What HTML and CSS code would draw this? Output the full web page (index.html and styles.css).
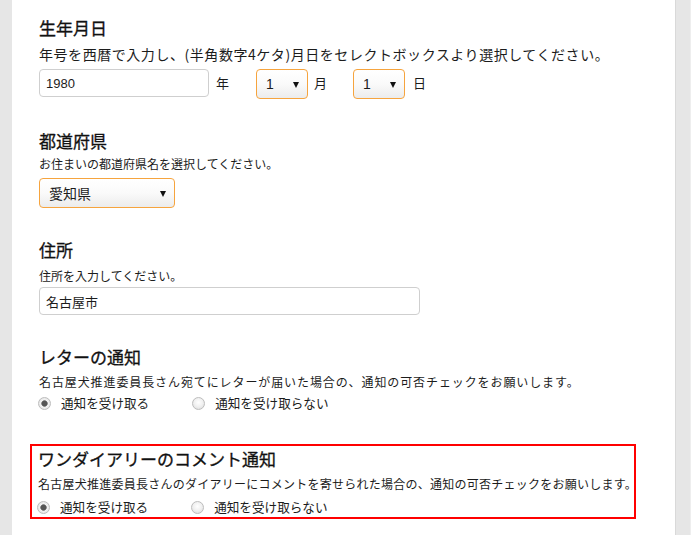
FILE: index.html
```html
<!DOCTYPE html>
<html lang="ja">
<head>
<meta charset="utf-8">
<title>プロフィール設定</title>
<link rel="stylesheet" href="styles.css">
</head>
<body>
<div class="page">
  <div class="gutter-left"></div>
  <main class="content">
    <section class="field f-birth">
      <h2>生年月日</h2>
      <p class="desc desc-lg">年号を西暦で入力し、(半角数字4ケタ)月日をセレクトボックスより選択してください。</p>
      <div class="row">
        <input class="text text-year" type="text" value="1980">
        <span class="unit unit-year">年</span>
        <span class="select sel-small"><span class="sel-val">1</span></span>
        <span class="unit unit-month">月</span>
        <span class="select sel-small"><span class="sel-val">1</span></span>
        <span class="unit unit-day">日</span>
      </div>
    </section>

    <section class="field f-pref">
      <h2>都道府県</h2>
      <p class="desc">お住まいの都道府県名を選択してください。</p>
      <span class="select sel-pref"><span class="sel-val">愛知県</span></span>
    </section>

    <section class="field f-addr">
      <h2>住所</h2>
      <p class="desc">住所を入力してください。</p>
      <input class="text text-addr" type="text" value="名古屋市">
    </section>

    <section class="field f-letter">
      <h2>レターの通知</h2>
      <p class="desc desc-letter">名古屋犬推進委員長さん宛てにレターが届いた場合の、通知の可否チェックをお願いします。</p>
      <div class="radios">
        <label class="opt"><input type="radio" name="letter" checked><span>通知を受け取る</span></label>
        <label class="opt opt-2"><input type="radio" name="letter"><span>通知を受け取らない</span></label>
      </div>
    </section>

    <section class="field f-diary">
      <h2>ワンダイアリーのコメント通知</h2>
      <p class="desc desc-diary">名古屋犬推進委員長さんのダイアリーにコメントを寄せられた場合の、通知の可否チェックをお願いします。</p>
      <div class="radios">
        <label class="opt"><input type="radio" name="diary" checked><span>通知を受け取る</span></label>
        <label class="opt opt-2"><input type="radio" name="diary"><span>通知を受け取らない</span></label>
      </div>
    </section>
  </main>
  <div class="gutter-right"></div>
  <div class="edge"></div>
</div>
</body>
</html>
```

FILE: styles.css
```css
html, body {
  margin: 0;
  padding: 0;
  background: #ffffff;
}

body {
  font-family: "Noto Sans CJK JP", "Liberation Sans", sans-serif;
  color: #1c1c1c;
}

.page {
  display: flex;
  height: 535px;
  overflow: hidden;
}

.gutter-left {
  width: 12px;
  flex: none;
  background: #e6e6e6;
}

.content {
  width: 663px;
  flex: none;
  box-sizing: border-box;
  padding: 17px 0 0 27px;
  background: #ffffff;
}

.gutter-right {
  width: 14px;
  flex: none;
  background: #e6e6e6;
  border-left: 1px solid #d9d9d9;
  border-right: 1px solid #eeeeee;
}

.edge {
  flex: 1;
  background: #ffffff;
}

.field h2 {
  margin: 0;
  font-size: 17px;
  line-height: 22px;
  font-weight: 400;
  color: #111111;
  -webkit-text-stroke: 0.3px #111111;
}

.desc {
  margin: 4px 0 0;
  font-size: 12px;
  line-height: 16px;
  color: #1c1c1c;
  white-space: nowrap;
}

.desc-lg {
  margin-top: 6px;
  font-size: 14px;
  line-height: 18px;
  letter-spacing: 0.55px;
}

.row {
  display: flex;
  align-items: flex-start;
  margin-top: 6px;
}

.text {
  box-sizing: border-box;
  height: 28px;
  margin: 0;
  padding: 0 6px;
  border: 1px solid #cfcfcf;
  border-radius: 4px;
  background: #ffffff;
  font-family: "Liberation Sans", "Noto Sans CJK JP", sans-serif;
  font-size: 13px;
  color: #1c1c1c;
  outline: none;
}

.text-year {
  width: 170px;
}

.text-addr {
  display: block;
  width: 381px;
  margin-top: 3px;
  font-family: "Noto Sans CJK JP", sans-serif;
}

.unit {
  font-size: 13px;
  line-height: 28px;
}

.unit-year {
  margin: 0 27px 0 7px;
}

.unit-month {
  margin: 0 26px 0 6px;
}

.unit-day {
  margin-left: 8px;
}

.select {
  position: relative;
  display: flex;
  align-items: center;
  box-sizing: border-box;
  height: 30px;
  border: 1px solid #f6a43e;
  border-radius: 4px;
  background: linear-gradient(#ffffff 0%, #fafafa 50%, #ececec 100%);
}

.select::after {
  content: "";
  position: absolute;
  right: 8px;
  top: 12px;
  border-left: 3px solid transparent;
  border-right: 3px solid transparent;
  border-top: 6px solid #111111;
}

.sel-val {
  font-size: 13px;
}

.sel-small {
  width: 52px;
  padding-left: 9px;
}

.sel-small .sel-val {
  font-family: "Liberation Sans", sans-serif;
  font-size: 14px;
}

.sel-pref {
  width: 136px;
  margin-top: 6px;
  padding-left: 9px;
}

.sel-pref .sel-val {
  font-size: 14px;
}

.f-pref,
.f-addr,
.f-letter {
  margin-top: 31px;
}

.f-addr .desc {
  margin-top: 7px;
}

.f-letter .desc {
  margin-top: 6px;
}

.desc-letter {
  letter-spacing: 0.9px;
}

.desc-diary {
  letter-spacing: 0.25px;
}

.radios {
  display: flex;
  align-items: center;
  height: 18px;
  margin-top: 4px;
}

.opt {
  display: flex;
  align-items: center;
  font-size: 12.6px;
  line-height: 18px;
}

.opt-2 {
  margin-left: 44px;
}

.opt input {
  appearance: none;
  -webkit-appearance: none;
  box-sizing: border-box;
  width: 13px;
  height: 13px;
  margin: 0 10px 0 -1px;
  border: 1px solid #bdbdbd;
  border-radius: 50%;
  background: radial-gradient(circle at 50% 40%, #ffffff 0%, #f0f0f0 50%, #d8d8d8 100%);
}

.opt input:checked {
  background: radial-gradient(circle, #555555 0 2.5px, #8a8a8a 3px, #f2f2f2 3.6px, #dcdcdc 100%);
}

.f-diary {
  box-sizing: border-box;
  width: 606px;
  margin: 32px 0 0 -9px;
  padding: 2px 0 1px 6px;
  border: 2px solid #ff0000;
}

.f-diary .desc {
  margin-top: 6px;
}

.f-diary .radios {
  margin-top: 6px;
}
```
